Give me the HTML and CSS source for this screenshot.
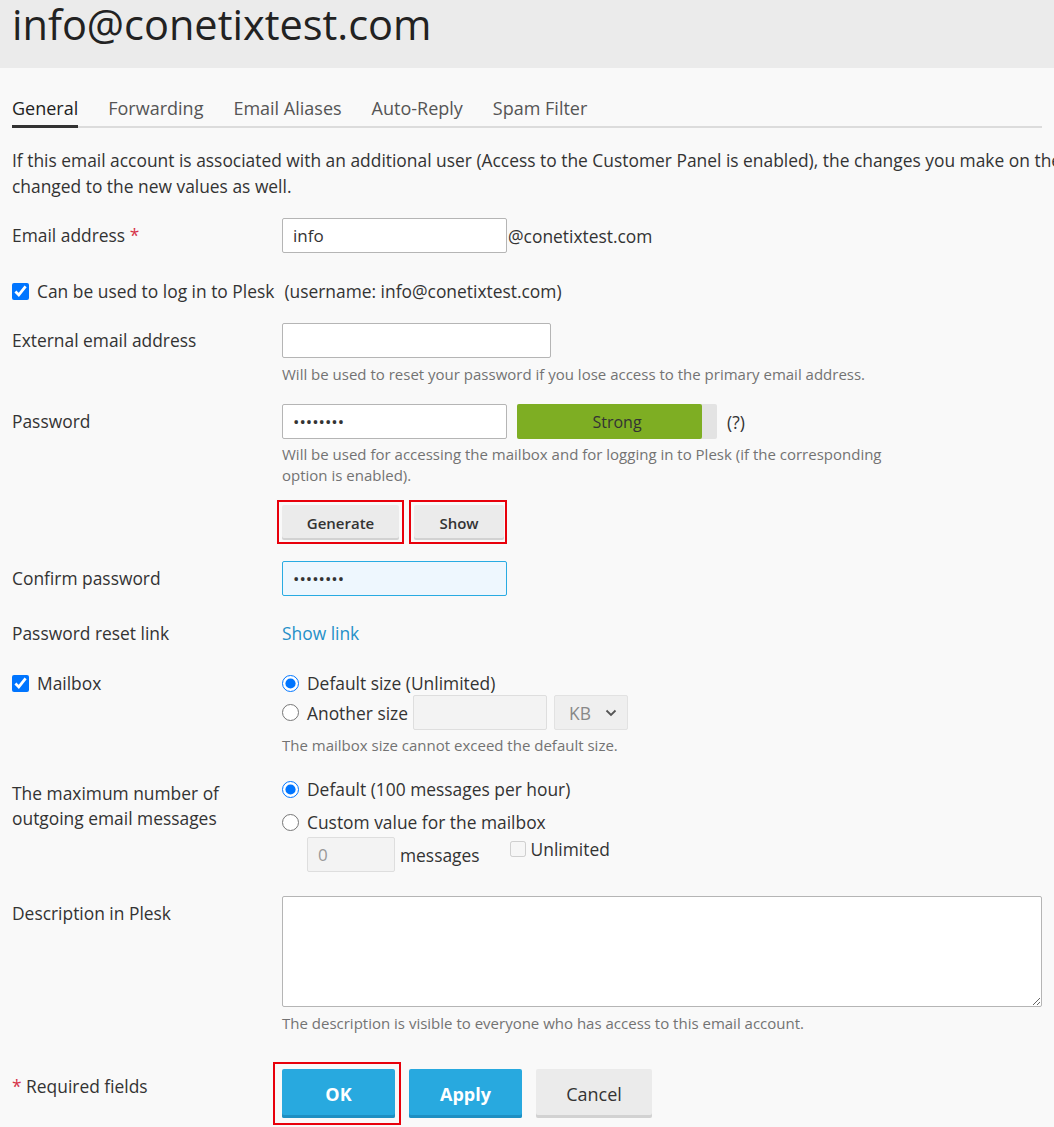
FILE: index.html
```html
<!DOCTYPE html>
<html lang="en">
<head>
    <meta charset="UTF-8">
    <meta name="viewport" content="width=device-width, initial-scale=1.0">
    <title>info@conetixtest.com</title>
    <link rel="stylesheet" href="styles.css">
</head>
<body>
    <div class="page-header">
        <h1 class="page-title">info@conetixtest.com</h1>
    </div>

    <div class="content">
        <ul class="tabs">
            <li class="tab active">General</li>
            <li class="tab">Forwarding</li>
            <li class="tab">Email Aliases</li>
            <li class="tab">Auto-Reply</li>
            <li class="tab">Spam Filter</li>
        </ul>

        <p class="intro">If this email account is associated with an additional user (Access to the Customer Panel is enabled), the changes you make on the email account will be<br>changed to the new values as well.</p>

        <form class="form" onsubmit="return false">
            <div class="form-row row-email">
                <label class="form-label" for="mail-name">Email address <span class="required">*</span></label>
                <div class="form-field">
                    <div class="inline">
                        <input type="text" id="mail-name" class="input w-email" value="info">
                        <span class="suffix">@conetixtest.com</span>
                    </div>
                </div>
            </div>

            <div class="check-row">
                <label class="check">
                    <input type="checkbox" checked>
                    <span>Can be used to log in to Plesk</span>
                </label>
                <span class="username">(username: info@conetixtest.com)</span>
            </div>

            <div class="form-row">
                <label class="form-label" for="ext-email">External email address</label>
                <div class="form-field">
                    <input type="text" id="ext-email" class="input w-ext">
                    <div class="hint hint-ext">Will be used to reset your password if you lose access to the primary email address.</div>
                </div>
            </div>

            <div class="form-row">
                <label class="form-label" for="password">Password</label>
                <div class="form-field">
                    <div class="inline">
                        <input type="password" id="password" class="input w-pass" value="password">
                        <div class="strength">
                            <div class="strength-fill" style="width: 185px"></div>
                            <span class="strength-text">Strong</span>
                        </div>
                        <span class="strength-help">(?)</span>
                    </div>
                    <div class="hint hint-pass">Will be used for accessing the mailbox and for logging in to Plesk (if the corresponding option is enabled).</div>
                    <div class="pass-buttons">
                        <button type="button" class="btn btn-small marked">Generate</button>
                        <button type="button" class="btn btn-small btn-show marked marked-show">Show</button>
                    </div>
                </div>
            </div>

            <div class="form-row row-confirm">
                <label class="form-label" for="confirm">Confirm password</label>
                <div class="form-field">
                    <input type="password" id="confirm" class="input w-pass input-focus" value="password">
                </div>
            </div>

            <div class="form-row row-plain">
                <span class="form-label">Password reset link</span>
                <div class="form-field">
                    <a href="#" class="link">Show link</a>
                </div>
            </div>

            <div class="form-row row-mailbox">
                <div class="form-label">
                    <label class="check">
                        <input type="checkbox" checked>
                        <span>Mailbox</span>
                    </label>
                </div>
                <div class="form-field">
                    <label class="radio">
                        <input type="radio" name="mbox" checked>
                        <span>Default size (Unlimited)</span>
                    </label>
                    <div class="radio-inline">
                        <label class="radio">
                            <input type="radio" name="mbox">
                            <span>Another size</span>
                        </label>
                        <input type="text" class="input input-disabled w-size" disabled>
                        <div class="select-disabled">
                            <span>KB</span>
                            <svg width="12" height="8" viewBox="0 0 12 8"><path d="M1.5 1.5 6 6l4.5-4.5" fill="none" stroke="#555" stroke-width="1.8"/></svg>
                        </div>
                    </div>
                    <div class="hint hint-mailbox">The mailbox size cannot exceed the default size.</div>
                </div>
            </div>

            <div class="form-row row-outgoing">
                <span class="form-label label-two">The maximum number of<br>outgoing email messages</span>
                <div class="form-field">
                    <label class="radio">
                        <input type="radio" name="outgoing" checked>
                        <span>Default (100 messages per hour)</span>
                    </label>
                    <label class="radio radio-second">
                        <input type="radio" name="outgoing">
                        <span>Custom value for the mailbox</span>
                    </label>
                    <div class="messages-row">
                        <input type="text" class="input input-disabled w-msg" value="0" disabled>
                        <span class="messages-text">messages</span>
                        <label class="check check-unlimited">
                            <input type="checkbox" disabled>
                            <span>Unlimited</span>
                        </label>
                    </div>
                </div>
            </div>

            <div class="form-row row-description">
                <label class="form-label" for="description">Description in Plesk</label>
                <div class="form-field">
                    <textarea id="description" class="textarea"></textarea>
                    <div class="hint hint-desc">The description is visible to everyone who has access to this email account.</div>
                </div>
            </div>

            <div class="form-footer">
                <span class="form-label"><span class="required">*</span> Required fields</span>
                <div class="footer-buttons">
                    <button type="submit" class="btn btn-large btn-primary marked marked-ok">OK</button>
                    <button type="button" class="btn btn-large btn-primary">Apply</button>
                    <button type="button" class="btn btn-large btn-cancel">Cancel</button>
                </div>
            </div>
        </form>
    </div>
</body>
</html>
```

FILE: styles.css
```css
:root {
    --text: #333;
    --hint: #737373;
    --border: #b5b5b5;
    --blue: #28a9df;
    --mark: #e8000b;
}

html {
    overflow-x: hidden;
}

body {
    margin: 0;
    padding-bottom: 12px;
    font-family: "Open Sans", Arial, sans-serif;
    font-size: 17.4px;
    color: var(--text);
    background-color: #f9f9f9;
}

.page-header {
    height: 68px;
    padding: 0 12px;
    background-color: #ebebeb;
}

.page-title {
    margin: 0;
    font-size: 41.5px;
    line-height: 48px;
    font-weight: 400;
    color: #222;
}

.content {
    padding: 0 12px;
}

/* tabs */
.tabs {
    display: flex;
    gap: 30px;
    margin: 28px 0 0;
    padding: 0;
    list-style: none;
    border-bottom: 2px solid #dcdcdc;
}

.tab {
    font-size: 18px;
    line-height: 24px;
    color: #555;
    padding-bottom: 5px;
    border-bottom: 3px solid transparent;
    margin-bottom: -2px;
}

.tab.active {
    color: #222;
    border-bottom-color: #333;
}

.intro {
    margin: 19px 0 0;
    line-height: 26px;
    white-space: nowrap;
}

/* form rows */
.form-row {
    display: flex;
    margin-top: 20px;
}

.form-label {
    width: 270px;
    flex: none;
    line-height: 24px;
    padding-top: 5px;
}

.form-field {
    flex: 1;
    min-width: 0;
}

.row-email {
    margin-top: 19px;
}

.row-confirm {
    margin-top: 21px;
}

.row-plain {
    margin-top: 25px;
}

.row-plain .form-label {
    padding-top: 0;
}

.row-mailbox {
    margin-top: 26px;
}

.row-mailbox .form-label {
    padding-top: 0;
}

.row-outgoing {
    margin-top: 22px;
}

.label-two {
    line-height: 25px;
    padding-top: 4px;
}

.row-description {
    margin-top: 24px;
}

.required {
    color: #d6354a;
}

.inline {
    display: flex;
    align-items: center;
}

.suffix {
    margin-left: 1px;
}

.input {
    height: 35px;
    box-sizing: border-box;
    padding: 0 10px;
    font-family: inherit;
    font-size: 17px;
    color: var(--text);
    background-color: #fff;
    border: 1px solid var(--border);
    border-radius: 2px;
    outline: none;
}

.w-email, .w-pass {
    width: 225px;
}

.w-ext {
    width: 269px;
}

.w-size {
    width: 134px;
}

.w-msg {
    width: 88px;
}

.input-focus {
    background-color: #eef7fe;
    border-color: #29abe2;
}

.input-disabled {
    background-color: #f3f3f3;
    border-color: #dedede;
    color: #999;
}

.hint {
    max-width: 610px;
    margin-top: 7px;
    font-size: 15px;
    line-height: 20px;
    color: var(--hint);
}

.hint-ext {
    margin-top: 6px;
}

.hint-pass {
    margin-top: 5px;
    line-height: 21px;
}

.hint-mailbox {
    margin-top: 5px;
}

.hint-desc {
    margin-top: 6px;
}

/* checkbox row */
.check-row {
    display: flex;
    align-items: center;
    margin-top: 26px;
    line-height: 24px;
}

.check {
    display: inline-flex;
    align-items: center;
}

.check input {
    width: 17px;
    height: 17px;
    margin: 0 8px 0 0;
}

.username {
    margin-left: 10px;
}

/* password strength */
.strength {
    display: grid;
    width: 200px;
    height: 35px;
    margin-left: 10px;
    background-color: #e3e3e3;
    border-radius: 2px;
}

.strength-fill,
.strength-text {
    grid-area: 1 / 1;
}

.strength-fill {
    height: 100%;
    background-color: #7eae23;
    border-radius: 2px;
}

.strength-text {
    align-self: center;
    justify-self: center;
    font-size: 16px;
    color: #333;
}

.strength-help {
    margin-left: 10px;
}

.pass-buttons {
    display: flex;
    gap: 15px;
    margin-top: 19px;
}

/* buttons */
.btn {
    font-family: inherit;
    color: #333;
    background-color: #ebebeb;
    border: none;
    border-radius: 2px;
    box-shadow: inset 0 -2px 0 #d2d2d2;
    cursor: pointer;
}

.btn-small {
    width: 117px;
    height: 35px;
    font-size: 15px;
    font-weight: 600;
}

.btn-show {
    width: 90px;
}

/* red highlight boxes around buttons */
.marked {
    position: relative;
}

.marked::after {
    content: "";
    position: absolute;
    top: -5px;
    right: -5px;
    bottom: -4px;
    left: -5px;
    border: 2px solid var(--mark);
    pointer-events: none;
}

.marked-show::after {
    right: -3px;
}

.marked-ok::after {
    top: -7px;
    right: -6px;
    bottom: -7px;
    left: -9px;
}

.link {
    line-height: 24px;
    color: #2590c8;
    text-decoration: none;
}

/* radios */
.radio {
    display: flex;
    align-items: center;
    line-height: 24px;
}

.radio input {
    width: 17px;
    height: 17px;
    margin: 0 8px 0 0;
}

.radio-inline {
    display: flex;
    align-items: center;
}

.radio-inline .radio {
    margin-right: 5px;
}

.select-disabled {
    display: flex;
    align-items: center;
    justify-content: space-between;
    width: 74px;
    height: 35px;
    box-sizing: border-box;
    margin-left: 7px;
    padding: 0 10px 0 14px;
    color: #888;
    background-color: #efefef;
    border: 1px solid #e2e2e2;
    border-radius: 2px;
}

.radio-second {
    margin-top: 8px;
    line-height: 26px;
}

.messages-row {
    display: flex;
    align-items: flex-start;
    margin-top: 2px;
    padding-left: 25px;
}

.messages-text {
    margin: 6px 0 0 5px;
    line-height: 24px;
}

.check-unlimited {
    margin: 0 0 0 30px;
    line-height: 24px;
}

.check-unlimited input {
    width: 16px;
    height: 16px;
    margin-right: 5px;
}

.textarea {
    display: block;
    width: 760px;
    height: 111px;
    box-sizing: border-box;
    font-family: inherit;
    font-size: 16px;
    background-color: #fff;
    border: 1px solid var(--border);
    border-radius: 2px;
}

/* footer */
.form-footer {
    display: flex;
    margin-top: 36px;
}

.footer-buttons {
    display: flex;
    gap: 14px;
}

.btn-large {
    width: 113px;
    height: 49px;
    font-size: 18px;
}

.btn-primary {
    color: #fff;
    font-weight: 700;
    background-color: var(--blue);
    box-shadow: inset 0 -3px 0 #1e8fc2;
}

.btn-cancel {
    width: 116px;
    box-shadow: inset 0 -3px 0 #d2d2d2;
}
```
